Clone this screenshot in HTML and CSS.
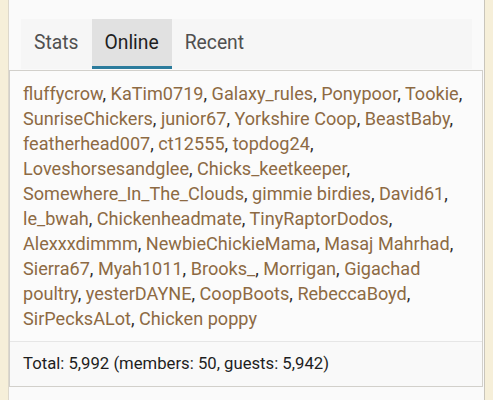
FILE: index.html
```html
<!DOCTYPE html>
<html>
<head>
<meta charset="utf-8">
<link rel="stylesheet" href="styles.css">
</head>
<body>
<div class="card">
  <div class="tabs">
    <div class="tab">Stats</div>
    <div class="tab active">Online</div>
    <div class="tab">Recent</div>
  </div>
  <div class="panel">
    <div class="names"><a>fluffycrow</a>, <a>KaTim0719</a>, <a>Galaxy_rules</a>, <a>Ponypoor</a>, <a>Tookie</a>, <a>SunriseChickers</a>, <a>junior67</a>, <a>Yorkshire Coop</a>, <a>BeastBaby</a>, <a>featherhead007</a>, <a>ct12555</a>, <a>topdog24</a>, <a>Loveshorsesandglee</a>, <a>Chicks_keetkeeper</a>, <a>Somewhere_In_The_Clouds</a>, <a>gimmie birdies</a>, <a>David61</a>, <a>le_bwah</a>, <a>Chickenheadmate</a>, <a>TinyRaptorDodos</a>, <a>Alexxxdimmm</a>, <a>NewbieChickieMama</a>, <a>Masaj Mahrhad</a>, <a>Sierra67</a>, <a>Myah1011</a>, <a>Brooks_</a>, <a>Morrigan</a>, <a>Gigachad poultry</a>, <a>yesterDAYNE</a>, <a>CoopBoots</a>, <a>RebeccaBoyd</a>, <a>SirPecksALot</a>, <a>Chicken poppy</a></div>
    <div class="footer">Total: 5,992 (members: 50, guests: 5,942)</div>
  </div>
</div>
</body>
</html>
```

FILE: styles.css
```css
html, body {
  margin: 0;
  padding: 0;
  height: 100%;
}
body {
  background: #f6efd9;
  font-family: Roboto, "Noto Sans", sans-serif;
}
.card {
  margin: 0 8px;
  min-height: 100%;
  background: #fafafa;
  border-left: 1px solid #ddd8cc;
  border-right: 1px solid #c9c5bb;
  padding-top: 19px;
  box-sizing: border-box;
}
.tabs {
  display: flex;
  margin: 0 12px;
  background: #f6f6f6;
}
.tab {
  padding: 0 13px;
  height: 47px;
  line-height: 47px;
  font-size: 19.3px;
  color: #505050;
  border-bottom: 3px solid transparent;
}
.tab.active {
  background: #e1e1e1;
  color: #1e1e1e;
  border-bottom-color: #2b7b9c;
}
.panel {
  margin: 1px 1px 0 0;
  border: 1px solid #d2d0cb;
  background: #fbfbfb;
}
.names {
  padding: 10px 10px 10px 13px;
  font-size: 18.1px;
  line-height: 25px;
  color: #2a2a2a;
  border-bottom: 1px solid #e6e6e6;
}
.names a {
  color: #8d6a43;
}
.footer {
  padding: 0 13px;
  height: 44px;
  line-height: 44px;
  font-size: 16.7px;
  color: #1e1e1e;
  background: #f9f9f9;
}
```
